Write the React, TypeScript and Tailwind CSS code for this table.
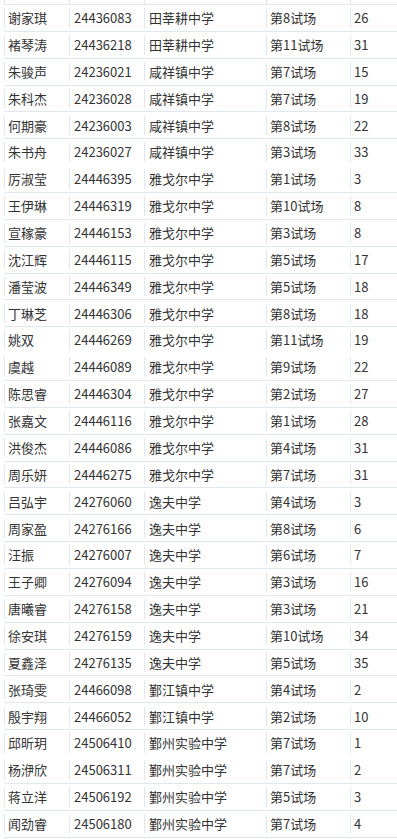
const rows: [string, string, string, string, string][] = [
  ["谢家琪", "24436083", "田莘耕中学", "第8试场", "26"],
  ["褚琴涛", "24436218", "田莘耕中学", "第11试场", "31"],
  ["朱骏声", "24236021", "咸祥镇中学", "第7试场", "15"],
  ["朱科杰", "24236028", "咸祥镇中学", "第7试场", "19"],
  ["何期豪", "24236003", "咸祥镇中学", "第8试场", "22"],
  ["朱书舟", "24236027", "咸祥镇中学", "第3试场", "33"],
  ["厉淑莹", "24446395", "雅戈尔中学", "第1试场", "3"],
  ["王伊琳", "24446319", "雅戈尔中学", "第10试场", "8"],
  ["宣稼豪", "24446153", "雅戈尔中学", "第3试场", "8"],
  ["沈江辉", "24446115", "雅戈尔中学", "第5试场", "17"],
  ["潘莹波", "24446349", "雅戈尔中学", "第5试场", "18"],
  ["丁琳芝", "24446306", "雅戈尔中学", "第8试场", "18"],
  ["姚双", "24446269", "雅戈尔中学", "第11试场", "19"],
  ["虞越", "24446089", "雅戈尔中学", "第9试场", "22"],
  ["陈思睿", "24446304", "雅戈尔中学", "第2试场", "27"],
  ["张嘉文", "24446116", "雅戈尔中学", "第1试场", "28"],
  ["洪俊杰", "24446086", "雅戈尔中学", "第4试场", "31"],
  ["周乐妍", "24446275", "雅戈尔中学", "第7试场", "31"],
  ["吕弘宇", "24276060", "逸夫中学", "第4试场", "3"],
  ["周家盈", "24276166", "逸夫中学", "第8试场", "6"],
  ["汪振", "24276007", "逸夫中学", "第6试场", "7"],
  ["王子卿", "24276094", "逸夫中学", "第3试场", "16"],
  ["唐曦睿", "24276158", "逸夫中学", "第3试场", "21"],
  ["徐安琪", "24276159", "逸夫中学", "第10试场", "34"],
  ["夏鑫泽", "24276135", "逸夫中学", "第5试场", "35"],
  ["张琦雯", "24466098", "鄞江镇中学", "第4试场", "2"],
  ["殷宇翔", "24466052", "鄞江镇中学", "第2试场", "10"],
  ["邱昕玥", "24506410", "鄞州实验中学", "第7试场", "1"],
  ["杨洢欣", "24506311", "鄞州实验中学", "第7试场", "2"],
  ["蒋立洋", "24506192", "鄞州实验中学", "第5试场", "3"],
  ["闻劲睿", "24506180", "鄞州实验中学", "第7试场", "4"],
];

// rows where the screenshot lost the line above
const noTopLine = [6, 13, 28];

function Cells({ cells }: { cells: string[] }) {
  return (
    <>
      <div className="w-[65px] shrink-0 border-l border-[#dfe7f1] pl-[3px]">{cells[0]}</div>
      <div className="w-[75px] shrink-0 border-l border-[#dfe7f1] pl-[4px]">{cells[1]}</div>
      <div className="w-[122px] shrink-0 border-l border-[#dfe7f1] pl-[4px]">{cells[2]}</div>
      <div className="w-[84px] shrink-0 border-l border-[#dfe7f1] pl-[3px]">{cells[3]}</div>
      <div className="flex-1 border-l border-[#dfe7f1] pl-[3px]">{cells[4]}</div>
    </>
  );
}

export default function App() {
  const blank = ["", "", "", "", ""];
  return (
    <div className="h-[839px] w-[397px] overflow-hidden bg-white pl-[4px] font-['Noto_Sans_CJK_SC',sans-serif] text-[13px] text-[#333]">
      <div className="flex h-[4px] items-stretch">
        <Cells cells={blank} />
      </div>
      {rows.map((r, i) => (
        <div
          key={r[1]}
          className={`flex h-[26.87px] items-center border-t ${noTopLine.includes(i) ? "border-transparent" : "border-[#dfe7f1]"}`}
        >
          <div className="flex h-full w-full items-center">
            <Cells cells={r} />
          </div>
        </div>
      ))}
      <div className="flex h-[10px] items-stretch border-t border-[#dfe7f1]">
        <Cells cells={blank} />
      </div>
    </div>
  );
}
